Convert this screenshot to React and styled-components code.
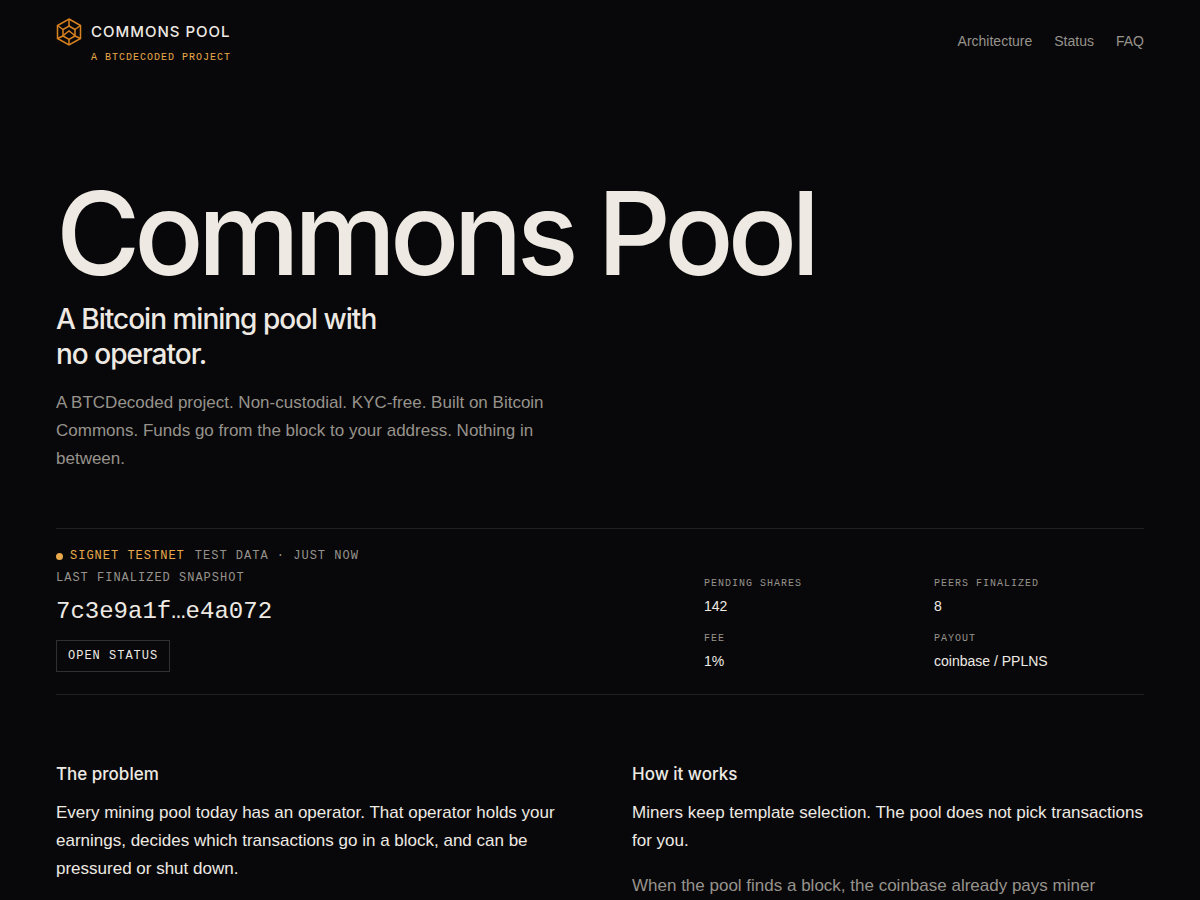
import styled, { createGlobalStyle } from 'styled-components'

const colors = {
  background: '#08080a',
  text: '#eeeae3',
  muted: '#97938c',
  accent: '#e8a94a',
  logo: '#d9821f',
  line: '#1f1f21',
  border: '#303032',
}

const fonts = {
  sans: '"Inter", "Liberation Sans", sans-serif',
  body: '"Liberation Sans", Arial, sans-serif',
  mono: '"Liberation Mono", monospace',
}

const stats = [
  { label: 'Pending shares', value: '142' },
  { label: 'Peers finalized', value: '8' },
  { label: 'Fee', value: '1%' },
  { label: 'Payout', value: 'coinbase / PPLNS' },
]

const Logo = () => (
  <LogoSvg viewBox="0 0 26 28" aria-hidden="true">
    <path d="M13 1 24.500 7.500v13L13 27 1.500 20.500v-13z" />
    <path d="M13 8 19 11.500v6.500l-6 3.500L7 18v-6.500z" />
    <path d="M13 1v7M24.500 7.500l-5.500 4M24.500 20.500 19 18M13 27v-5.500M1.500 20.500 7 18M1.500 7.500l5.500 4" />
    <path d="M7 18l2-2 4-3 4 3 2 2" />
  </LogoSvg>
)

const App = () => (
  <>
    <GlobalStyle />
    <Header>
      <Brand href="#">
        <Logo />
        <BrandName>Commons Pool</BrandName>
        <BrandNote>A BTCDecoded project</BrandNote>
      </Brand>
      <Nav>
        <NavLink href="#architecture">Architecture</NavLink>
        <NavLink href="#status">Status</NavLink>
        <NavLink href="#faq">FAQ</NavLink>
      </Nav>
    </Header>
    <Main>
      <Hero>
        <Title>Commons Pool</Title>
        <Tagline>
          A Bitcoin mining pool with
          <br />
          no operator.
        </Tagline>
        <Lead>
          A BTCDecoded project. Non-custodial. KYC-free. Built on Bitcoin
          Commons. Funds go from the block to your address. Nothing in
          between.
        </Lead>
      </Hero>
      <Snapshot id="status">
        <div>
          <Label>
            <Network>Signet testnet</Network>
            <span>Test data · just now</span>
          </Label>
          <Label>Last finalized snapshot</Label>
          <Hash>7c3e9a1f…e4a072</Hash>
          <StatusLink href="#status">Open status</StatusLink>
        </div>
        <Stats>
          {stats.map(({ label, value }) => (
            <div key={label}>
              <StatLabel>{label}</StatLabel>
              <StatValue>{value}</StatValue>
            </div>
          ))}
        </Stats>
      </Snapshot>
      <Columns id="architecture">
        <section>
          <Heading>The problem</Heading>
          <Paragraph>
            Every mining pool today has an operator. That operator holds your
            earnings, decides which transactions go in a block, and can be
            pressured or shut down.
          </Paragraph>
        </section>
        <section>
          <Heading>How it works</Heading>
          <Paragraph>
            Miners keep template selection. The pool does not pick transactions
            for you.
          </Paragraph>
          <Paragraph $muted>
            When the pool finds a block, the coinbase already pays miner
          </Paragraph>
        </section>
      </Columns>
    </Main>
  </>
)

const GlobalStyle = createGlobalStyle`
  *, *::before, *::after {
    box-sizing: border-box;
  }

  body {
    margin: 0;
    color: ${colors.text};
    background: ${colors.background};
    font-family: ${fonts.body};
    -webkit-font-smoothing: antialiased;
  }

  h1, h2, p, dl, dt, dd {
    margin: 0;
  }

  a {
    color: inherit;
    text-decoration: none;
  }
`

const Header = styled.header`
  display: flex;
  align-items: flex-start;
  justify-content: space-between;
  padding: 18px 56px 14px;
`

const Brand = styled.a`
  display: grid;
  grid-template-columns: 26px auto;
  column-gap: 9px;
  align-items: center;
`

const LogoSvg = styled.svg`
  width: 26px;
  height: 28px;
  fill: none;
  stroke: ${colors.logo};
  stroke-width: 1.5;
`

const BrandName = styled.span`
  font: 500 15px/28px ${fonts.sans};
  letter-spacing: 1px;
  text-transform: uppercase;
`

const BrandNote = styled.span`
  grid-column: 2;
  color: ${colors.accent};
  font: 10px/24px ${fonts.mono};
  letter-spacing: 1px;
  text-transform: uppercase;
`

const Nav = styled.nav`
  display: flex;
  gap: 22px;
  padding-top: 13px;
`

const NavLink = styled.a`
  color: ${colors.muted};
  font-size: 14px;
  line-height: 20px;
`

const Main = styled.main`
  padding: 0 56px;
`

const Hero = styled.div`
  padding: 90px 0 55px;
`

const Title = styled.h1`
  font: 500 115px/120px ${fonts.sans};
  letter-spacing: -6px;
`

const Tagline = styled.p`
  margin-top: 8px;
  font: 500 28px/35px ${fonts.sans};
  letter-spacing: -1px;
`

const Lead = styled.p`
  margin-top: 17px;
  max-width: 500px;
  color: ${colors.muted};
  font-size: 17px;
  line-height: 28px;
`

const Snapshot = styled.section`
  display: grid;
  grid-template-columns: 7fr 5fr;
  gap: 32px;
  align-items: end;
  padding: 16px 0 22px;
  border-top: 1px solid ${colors.line};
  border-bottom: 1px solid ${colors.line};
`

const Label = styled.p`
  display: flex;
  gap: 10px;
  color: ${colors.muted};
  font: 12px/22px ${fonts.mono};
  letter-spacing: 1px;
  text-transform: uppercase;
`

const Network = styled.span`
  display: flex;
  align-items: center;
  gap: 7px;
  color: ${colors.accent};

  &::before {
    content: '';
    width: 7px;
    height: 7px;
    border-radius: 50%;
    background: currentColor;
  }
`

const Hash = styled.p`
  margin: 6px 0 11px;
  font: 24px/34px ${fonts.mono};
`

const StatusLink = styled.a`
  display: block;
  width: fit-content;
  padding: 0 11px;
  border: 1px solid ${colors.border};
  font: 12px/30px ${fonts.mono};
  letter-spacing: 1px;
  text-transform: uppercase;
`

const Stats = styled.dl`
  display: grid;
  grid-template-columns: 1fr 1fr;
  gap: 12px 20px;
`

const StatLabel = styled.dt`
  color: ${colors.muted};
  font: 10px/20px ${fonts.mono};
  letter-spacing: 1px;
  text-transform: uppercase;
`

const StatValue = styled.dd`
  padding-top: 1px;
  font-size: 14px;
  line-height: 22px;
`

const Columns = styled.div`
  display: grid;
  grid-template-columns: 1fr 1fr;
  gap: 64px;
  padding: 65px 0;
`

const Heading = styled.h2`
  font: 500 17px/28px ${fonts.sans};
`

const Paragraph = styled.p`
  margin-top: ${p => p.$muted ? 17 : 11}px;
  color: ${p => p.$muted ? colors.muted : colors.text};
  font-size: 17px;
  line-height: 28px;
`

export default App
